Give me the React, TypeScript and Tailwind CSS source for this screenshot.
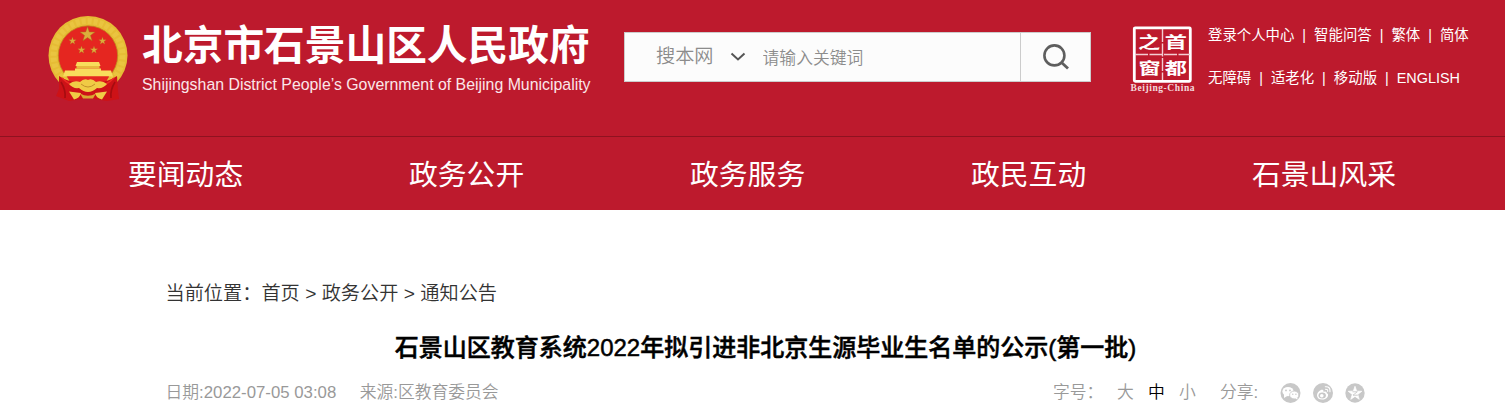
const navItems = ["要闻动态", "政务公开", "政务服务", "政民互动", "石景山风采"];

const topLinks = [
  ["登录个人中心", "智能问答", "繁体", "简体"],
  ["无障碍", "适老化", "移动版", "ENGLISH"],
];

const STAR =
  "M0 -10 L2.35 -3.24 L9.51 -3.09 L3.8 1.24 L5.88 8.09 L0 4 L-5.88 8.09 L-3.8 1.24 L-9.51 -3.09 L-2.35 -3.24 Z";

const Emblem = () => (
  <svg width="80" height="86" viewBox="0 0 80 86">
    <circle cx="40" cy="39.5" r="39.5" fill="#e6bc35" />
    <circle cx="40" cy="39.5" r="34.5" fill="none" stroke="#eac440" strokeWidth="6" strokeDasharray="4 2" />
    <circle cx="40" cy="39.5" r="29.7" fill="#e52620" stroke="#c08a20" strokeWidth="0.8" />
    <g fill="#dcae3c" stroke="#a8701c" strokeWidth="0.6">
      <path d={STAR} transform="translate(39.5 18.5) scale(.78)" />
      <path d={STAR} transform="translate(24.5 25) scale(.4)" />
      <path d={STAR} transform="translate(54.5 25) scale(.4)" />
      <path d={STAR} transform="translate(33.5 34) scale(.4)" />
      <path d={STAR} transform="translate(46 34) scale(.4)" />
    </g>
    <g fill="#f8dc5c">
      <path d="M29 46 H51 L52.5 50 H27.5 Z" />
      <path d="M28.5 50 H51.5 V52.5 H28.5 Z" fill="#e8b83c" />
      <path d="M27 52.5 H53 V54.5 H63 L65 60.5 H15 L17 54.5 H27 Z" />
    </g>
    <path d="M19 60.5 H61 L58 66 H22 Z" fill="#e52620" />
    <path d="M11 60 Q20 66 30 66 L50 66 Q60 66 69 60 L70 75 L71 83 L59 85 L40 82 L21 85 L8 80 L11 73 Z" fill="#cd1217" />
    <path d="M13 66 Q18 74 17 82 M67 66 Q62 74 63 82" fill="none" stroke="#a50c10" strokeWidth="1.6" />
    <path d="M14 62 Q22 70 30 70 M66 62 Q58 70 50 70" fill="none" stroke="#ee2a24" strokeWidth="1.6" />
    <path d="M21 68 Q26 64 32 66 Q36 62 40 64 Q44 62 48 66 Q54 64 59 68 Q55 73 49 72 Q40 80 31 72 Q25 73 21 68 Z" fill="#f0cb45" />
    <path d="M33 68 Q40 74 47 68" fill="none" stroke="#c4902a" strokeWidth="1" />
    <path d="M21 75.5 L33 77 Q32 82 26 83.5 Z M59 75.5 L47 77 Q48 82 54 83.5 Z" fill="#f0cb45" />
    <path d="M32 77.5 Q40 82 48 77.5 L45 82.5 H35 Z" fill="#d9a832" />
  </svg>
);

const Seal = () => (
  <svg width="66" height="70" viewBox="0 0 66 70" fill="#fff">
    <rect x="4.3" y="2.8" width="56" height="53.5" rx="1" fill="none" stroke="#fff" strokeWidth="2.8" />
    <path d="M32.5 4 V55 M5 29.5 H60" stroke="#f3cdd2" strokeWidth="1.4" strokeDasharray="13 1.5" fill="none" />
    <g className="font-['Noto_Sans_CJK_SC',sans-serif] font-bold">
      <text transform="translate(8 22.5) scale(1.2 .84)" fontSize="18.5">之</text>
      <text transform="translate(34.8 22.5) scale(1.2 .84)" fontSize="18.5">首</text>
      <text transform="translate(8.4 48.5) scale(1.2 .84)" fontSize="18.5">窗</text>
      <text transform="translate(34.8 48.5) scale(1.2 .84)" fontSize="18.5">都</text>
    </g>
    <text
      x="0.5"
      y="66.3"
      fontSize="9.5"
      textLength="64"
      fillOpacity="0.85"
      className="font-['Liberation_Serif',serif] font-bold"
    >
      Beijing-China
    </text>
  </svg>
);

const WechatIcon = () => (
  <svg width="21" height="20" viewBox="0 0 21 20">
    <circle cx="10.5" cy="10" r="10" fill="#c8c8c8" />
    <ellipse cx="8" cy="8.6" rx="5.6" ry="4.6" fill="#fff" />
    <path d="M4 11 L4 15 L8 12.5 Z" fill="#fff" />
    <ellipse cx="14.2" cy="12" rx="4.6" ry="3.9" fill="#fff" stroke="#c8c8c8" strokeWidth="0.8" />
    <path d="M15 15 L17.5 16.8 L17.3 14 Z" fill="#fff" />
    <g fill="#c8c8c8">
      <circle cx="6" cy="7.4" r="0.9" />
      <circle cx="10" cy="7.4" r="0.9" />
      <circle cx="12.8" cy="11.2" r="0.7" />
      <circle cx="15.9" cy="11.2" r="0.7" />
    </g>
  </svg>
);

const WeiboIcon = () => (
  <svg width="20" height="20" viewBox="0 0 20 20">
    <circle cx="10" cy="10" r="10" fill="#c8c8c8" />
    <path d="M4 12.5 C4 9 8 6.2 10 7 Q10.8 7.5 10.4 8.8 Q14 7.6 13.7 10 Q15.8 10.8 15 13 C14 15.6 11.5 16.6 9 16.6 C6 16.6 4 14.8 4 12.5 Z" fill="#fff" />
    <ellipse cx="9.2" cy="12.5" rx="3.7" ry="2.9" fill="#c8c8c8" />
    <circle cx="8.8" cy="12.8" r="1.8" fill="#fff" />
    <path d="M12.3 3.8 Q17.5 3.2 17 8.8 M12.5 6.2 Q15 6 14.7 8.4" fill="none" stroke="#fff" strokeWidth="1.1" strokeLinecap="round" />
  </svg>
);

const QzoneIcon = () => (
  <svg width="20" height="20" viewBox="0 0 20 20">
    <circle cx="10" cy="10" r="9.7" fill="#c8c8c8" />
    <path d={STAR} transform="translate(10 10.5) scale(.72)" fill="#fff" stroke="#fff" strokeWidth="1" strokeLinejoin="round" />
    <path d="M7.5 8.8 H12.3 L8 12.2 H12.8" fill="none" stroke="#c8c8c8" strokeWidth="0.9" />
  </svg>
);

const Header = () => (
  <header className="h-[210px] bg-[#bd1a2d] text-white">
    <div className="flex h-[137px] items-start border-b border-[#8f1220] pl-12">
      <div className="pt-4">
        <Emblem />
      </div>
      <div className="ml-[14px] w-[482px] pt-[21px]">
        <h1 className="text-[40.7px] leading-[50px] font-bold whitespace-nowrap">
          北京市石景山区人民政府
        </h1>
        <p className="origin-left scale-x-[.923] text-[17.2px] leading-[26px] whitespace-nowrap text-[#fbe6e9]">
          Shijingshan District People’s Government of Beijing Municipality
        </p>
      </div>

      <div className="mt-8 flex h-[50px] w-[467px] border border-[#ccc] bg-[#fcfcfc] font-[350] text-[#8c8c8c]">
        <div className="flex items-center pl-[31px]">
          <span className="text-[19.2px] leading-[48px]">搜本网</span>
          <svg width="16" height="10" viewBox="0 0 16 10" className="ml-4">
            <path d="M1.5 1.5 L8 7.5 L14.5 1.5" fill="none" stroke="#555" strokeWidth="2" />
          </svg>
        </div>
        <input
          type="text"
          placeholder="请输入关键词"
          className="ml-[17px] h-[48px] flex-1 pt-1 text-[16.8px] outline-none placeholder:text-[#8c8c8c]"
        />
        <button className="flex w-[70px] items-center justify-center border-l border-[#ccc]">
          <svg width="28" height="28" viewBox="0 0 28 28" fill="none" stroke="#5e5e5e">
            <circle cx="12.4" cy="12.4" r="10" strokeWidth="2.6" />
            <path d="M19.5 19.5 L26 25.5" strokeWidth="2.8" />
          </svg>
        </button>
      </div>

      <div className="mt-[25px] ml-[38.5px]">
        <Seal />
      </div>
      <div className="ml-[12.5px] flex flex-col pt-[14px] text-[14.4px] leading-[43px]">
        {topLinks.map((row) => (
          <div key={row[0]} className="flex whitespace-pre">
            {row.map((link, i) => (
              <div key={link}>
                {i > 0 && "  |  "}
                <a href="#">{link}</a>
              </div>
            ))}
          </div>
        ))}
      </div>
    </div>

    <nav className="grid grid-cols-[repeat(5,281px)] overflow-hidden pt-[3px] pl-32">
      {navItems.map((item) => (
        <a href="#" key={item} className="text-[28.8px] leading-[70px]">
          {item}
        </a>
      ))}
    </nav>
  </header>
);

const App = () => {
  return (
    <div className="h-[419px] overflow-hidden bg-white font-['Liberation_Sans','Noto_Sans_CJK_SC',sans-serif]">
      <Header />
      <main className="pr-[140px] pl-[165.5px]">
        <div className="pt-[69px] text-[19.2px] leading-[30px] font-[350] text-[#333]">
          当前位置：<a href="#">首页</a> &gt; <a href="#">政务公开</a> &gt; <a href="#">通知公告</a>
        </div>
        <h2 className="mt-[21px] w-[1200px] text-center text-2xl leading-[36px] font-medium whitespace-nowrap text-black [-webkit-text-stroke:0.5px_black]">
          石景山区教育系统2022年拟引进非北京生源毕业生名单的公示(第一批)
        </h2>
        <div className="mt-[12px] flex h-[30px] items-center text-[16.8px] font-[350] whitespace-nowrap text-[#999]">
          <span>日期:2022-07-05 03:08</span>
          <span className="ml-[23.5px]">来源:区教育委员会</span>
          <div className="ml-auto flex w-[312px] items-center">
            <span className="w-[64px]">字号：</span>
            <span className="w-[31px]">大</span>
            <span className="w-[31px] text-black">中</span>
            <span className="w-[41px]">小</span>
            <span className="w-[60px]">分享:</span>
            <div className="flex gap-3">
              <WechatIcon />
              <WeiboIcon />
              <QzoneIcon />
            </div>
          </div>
        </div>
      </main>
    </div>
  );
};

export default App;
